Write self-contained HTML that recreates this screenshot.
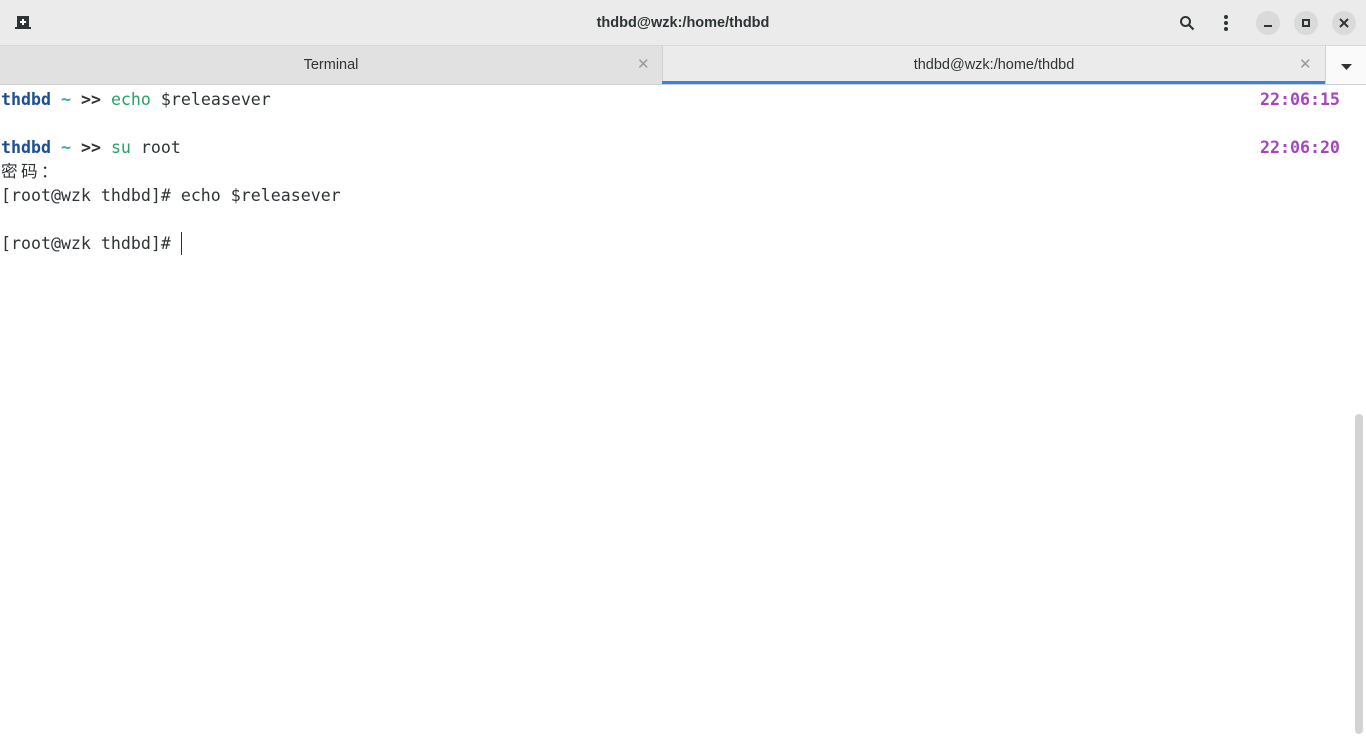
<!DOCTYPE html>
<html><head><meta charset="utf-8"><style>
*{margin:0;padding:0;box-sizing:border-box}
body{width:1366px;height:736px;overflow:hidden;background:#fff;position:relative;font-family:"Liberation Sans",sans-serif}
.hdr{position:absolute;left:0;top:0;width:1366px;height:46px;background:#ebebeb;border-bottom:1px solid #d8d8d8}
.title{position:absolute;left:0;width:1366px;top:15px;text-align:center;font-weight:bold;font-size:14.5px;color:#2e3436}
.tabs{position:absolute;top:46px;left:0;width:1366px;height:39px;background:#e1e1e1;border-bottom:1px solid #d0d0d0}
.tab{position:absolute;top:0;height:38px;font-size:14.5px;color:#2e3436;text-align:center;line-height:38px}
.x{position:absolute;top:0;font-size:15px;color:#999;line-height:37px}
.wbtn{position:absolute;top:11px;width:24px;height:24px;border-radius:12px;background:#dadada}
.term{position:absolute;left:1px;top:88px;font-family:"DejaVu Sans Mono","Noto Sans CJK SC",monospace;font-size:16.6px;line-height:24px;color:#2e3436;white-space:pre}
.u{color:#1c4f91;font-weight:bold}.t{color:#3da5ad;font-weight:bold}.a{color:#333;font-weight:bold}.g{color:#26a269}
.c{display:inline-block;width:20px;text-align:left}
.time{position:absolute;left:1260px;font-family:"DejaVu Sans Mono",monospace;font-size:16.6px;font-weight:bold;color:#a347ba;line-height:24px}
</style></head><body>
<div class="hdr">
<svg style="position:absolute;left:15px;top:16px" width="16" height="13" viewBox="0 0 16 13"><path d="M2 0h12v12H2z" fill="#2e3436"/><path d="M0 11h16v2H0z" fill="#2e3436"/><path d="M7 3h2v2h2v2H9v2H7V7H5V5h2z" fill="#fff"/></svg>
<div class="title">thdbd@wzk:/home/thdbd</div>
<svg style="position:absolute;left:1179px;top:15px" width="16" height="16" viewBox="0 0 16 16"><circle cx="6.5" cy="6.5" r="4.5" fill="none" stroke="#2e3436" stroke-width="2"/><path d="M10 10l4.5 4.5" stroke="#2e3436" stroke-width="2.2"/></svg>
<svg style="position:absolute;left:1223px;top:14px" width="6" height="18"><circle cx="3" cy="3" r="2" fill="#2e3436"/><circle cx="3" cy="9" r="2" fill="#2e3436"/><circle cx="3" cy="15" r="2" fill="#2e3436"/></svg>
<div class="wbtn" style="left:1256px"><div style="position:absolute;left:8px;top:14px;width:8px;height:2px;background:#2e3436"></div></div>
<div class="wbtn" style="left:1294px"><div style="position:absolute;left:8px;top:8px;width:8px;height:8px;border:2px solid #2e3436"></div></div>
<div class="wbtn" style="left:1332px"><svg style="position:absolute;left:7px;top:7px" width="10" height="10"><path d="M1 1l8 8M9 1l-8 8" stroke="#2e3436" stroke-width="2"/></svg></div>
</div>
<div class="tabs">
<div class="tab" style="left:0;width:662px">Terminal</div>
<div class="x" style="left:637px">✕</div>
<div class="tab" style="left:662px;width:663px;background:#ebebeb;border-left:1px solid #d0d0d0">thdbd@wzk:/home/thdbd</div>
<div class="x" style="left:1299px">✕</div>
<div style="position:absolute;left:662px;top:35px;width:663px;height:3px;background:#3584e4"></div>
<div style="position:absolute;left:1325px;top:0;width:41px;height:38px;background:#fafafa;border-left:1px solid #d0d0d0"></div>
<svg style="position:absolute;left:1341px;top:18px" width="11" height="6"><path d="M0 0h11L5.5 6z" fill="#2e3436"/></svg>
</div>
<div class="term"><span class="u">thdbd</span> <span class="t">~</span> <span class="a">&gt;&gt;</span> <span class="g">echo</span> $releasever

<span class="u">thdbd</span> <span class="t">~</span> <span class="a">&gt;&gt;</span> <span class="g">su</span> root
<span class="c">密</span><span class="c">码</span><span class="c">：</span>
[root@wzk thdbd]# echo $releasever

[root@wzk thdbd]# </div>
<div style="position:absolute;left:181px;top:232px;width:1px;height:23px;background:#2e3436"></div>
<div class="time" style="top:88px">22:06:15</div>
<div class="time" style="top:136px">22:06:20</div>
<div style="position:absolute;left:1355px;top:414px;width:8px;height:320px;border-radius:4px;background:#d3d3d3"></div>
</body></html>
